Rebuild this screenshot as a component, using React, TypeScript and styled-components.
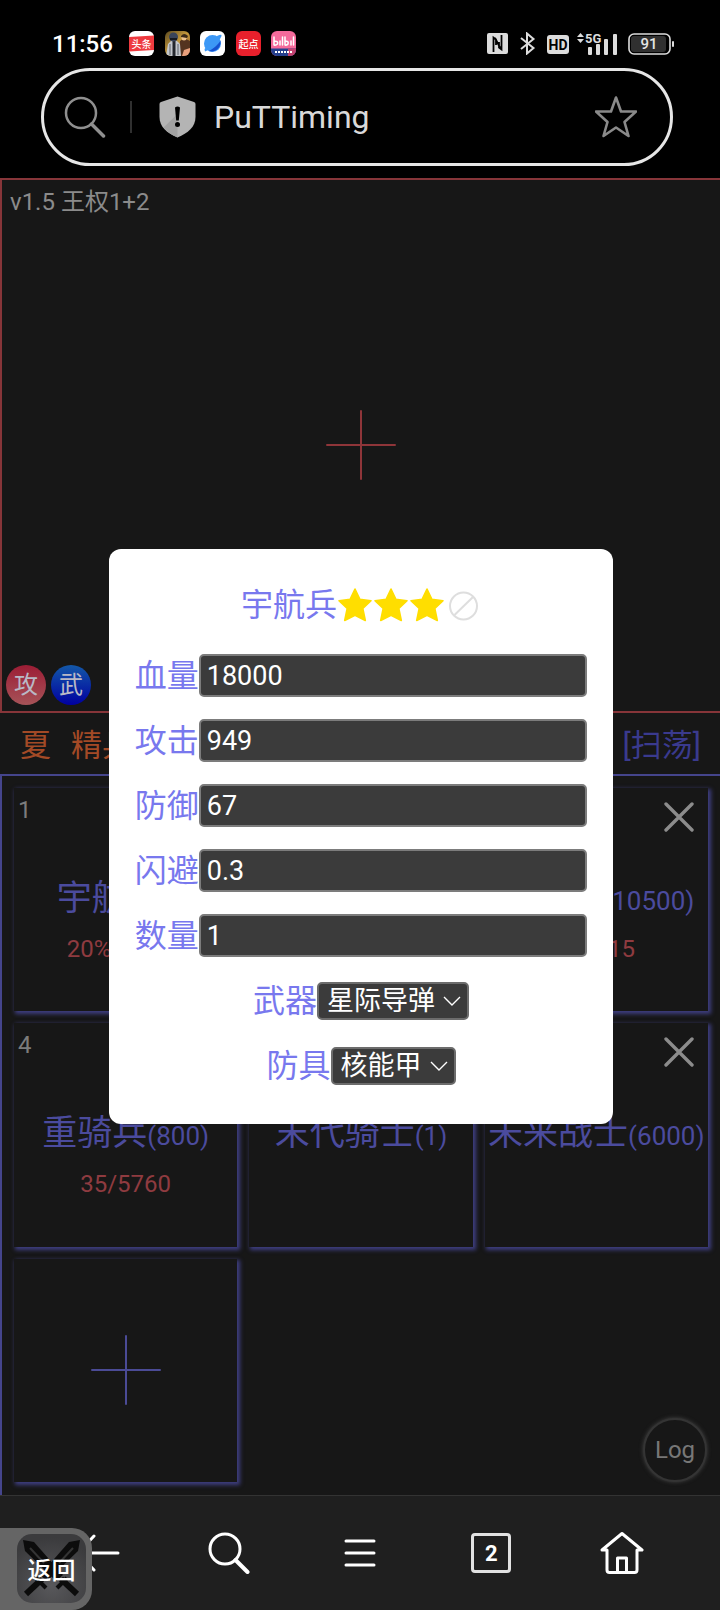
import React, { useState } from "react";
import styled, { createGlobalStyle } from "styled-components";

const GlobalStyle = createGlobalStyle`
  *, *::before, *::after { box-sizing: border-box; }
  body {
    margin: 0;
    background: #171717;
    font-family: Roboto, "Noto Sans CJK SC", sans-serif;
    font-size: 24px;
    font-weight: 400;
  }
  button, input, select { font-family: inherit; margin: 0; }
  svg { display: block; flex: none; }
`;

const Page = styled.div`
  position: relative;
  display: flex;
  flex-direction: column;
  min-height: 100vh;
  overflow: hidden;
`;

/* ---------- phone status and address bar ---------- */

const Header = styled.header`
  padding: 31px 0 12px;
  background: #000;
`;

const StatusRow = styled.div`
  display: flex;
  align-items: center;
  height: 25px;
  padding: 0 46px 0 52px;
  margin-bottom: 12px;
`;

const Clock = styled.time`
  width: 77px;
  color: #fff;
  font-weight: 500;
  line-height: 24px;
`;

const AppIcons = styled.div`
  display: flex;
  justify-content: space-between;
  width: 167px;
`;

const Signals = styled.div`
  display: flex;
  align-items: center;
  gap: 11px;
  margin-left: auto;
`;

const Network = styled.div`
  display: flex;
  align-items: center;
  gap: 8px;
`;

const AddressBar = styled.div`
  display: flex;
  align-items: center;
  height: 98px;
  margin: 0 47px 0 41px;
  padding: 0 33px 0 20px;
  border: 3px solid #e6e6e6;
  border-radius: 49px;
`;

const Divider = styled.span`
  width: 2px;
  height: 32px;
  margin: 0 27px 0 24px;
  background: #303030;
`;

const SiteName = styled.span`
  flex: 1;
  margin-left: 18px;
  color: #d9d9d9;
  font-size: 32px;
  line-height: 40px;
`;

const IconButton = styled.button`
  display: flex;
  align-items: center;
  justify-content: center;
  padding: 0;
  border: 0;
  background: none;
  color: inherit;
  cursor: pointer;
`;

/* ---------- battle field ---------- */

const Game = styled.main`
  position: relative;
  display: flex;
  flex: 1;
  flex-direction: column;
  color: #8b8b8b;
`;

const EnemyField = styled.section`
  display: flex;
  flex-direction: column;
  justify-content: space-between;
  height: 535px;
  border: 2px solid #873539;
  border-right: 0;
`;

const Version = styled.div`
  height: 44px;
  padding: 8px 8px 0;
  line-height: 28px;
`;

const AddEnemy = styled(IconButton)`
  align-self: center;
  color: #8f3539;
`;

const Badges = styled.div`
  display: flex;
  gap: 5px;
  height: 46px;
  padding-left: 4px;
`;

const Badge = styled.span<{ $from: string; $to: string }>`
  width: 40px;
  height: 40px;
  border-radius: 50%;
  background: linear-gradient(${(p) => p.$from}, ${(p) => p.$to});
  color: #b9b9c6;
  line-height: 40px;
  text-align: center;
`;

const StageBar = styled.div`
  display: flex;
  align-items: center;
  gap: 20px;
  height: 61px;
  padding: 4px 19px 0 20px;
  color: #a34a26;
  font-size: 31px;
  line-height: 40px;
`;

const Sweep = styled.button`
  margin-left: auto;
  padding: 0;
  border: 0;
  background: none;
  color: #3a3a8e;
  font-size: 31px;
  line-height: 40px;
  cursor: pointer;
`;

const Squad = styled.section`
  display: grid;
  flex: 1;
  grid-template-columns: repeat(3, 1fr);
  align-content: start;
  gap: 12px;
  padding: 12px;
  border: 2px solid #45458c;
  border-width: 2px 0 0 2px;
`;

const cell = `
  aspect-ratio: 1;
  min-width: 0;
  background: #171717;
  box-shadow: 2px 2px 4px 1px #3e3e80;
`;

const UnitCard = styled.article`
  ${cell}
  display: grid;
  grid-template-rows: 1fr auto 1fr;
`;

const CardTop = styled.div`
  display: flex;
  align-items: flex-start;
  justify-content: space-between;
  padding: 8px 14px 0 4px;
  line-height: 28px;
  color: #7c7c7c;
`;

const CloseButton = styled(IconButton)`
  margin-top: 6px;
  color: #8c8c8c;
`;

const UnitName = styled.h3`
  margin: 0;
  color: #4b4b9e;
  font-size: 35px;
  font-weight: 400;
  line-height: 42px;
  text-align: center;
  white-space: nowrap;

  small { font-size: 26px; }
`;

const Damage = styled.p`
  margin: 0;
  padding-top: 13px;
  color: #8f3b40;
  line-height: 28px;
  text-align: center;
`;

const AddUnit = styled(IconButton)`
  ${cell}
  color: #4b4b96;
`;

const LogButton = styled.button`
  position: absolute;
  right: 13px;
  bottom: 13px;
  width: 64px;
  height: 64px;
  padding: 0;
  border: 2px solid #343434;
  border-radius: 50%;
  background: #171717;
  box-shadow: 0 0 4px #444;
  color: #777;
  font-size: 24px;
  cursor: pointer;
`;

/* ---------- unit editor ---------- */

const Overlay = styled.div`
  position: absolute;
  inset: 0 0 0 2px;
  display: grid;
  place-items: center;
`;

const Dialog = styled.form`
  display: flex;
  flex-direction: column;
  gap: 22px;
  width: calc(70% + 2px);
  padding: 34px 26px 37px;
  border-radius: 12px;
  background: #fff;
  color: #7878ee;
  font-size: 32px;
  line-height: 40px;
`;

const Title = styled.h2`
  display: flex;
  align-items: center;
  justify-content: center;
  height: 43px;
  margin: 0 0 6px;
  font-size: inherit;
  font-weight: inherit;
`;

const Field = styled.div`
  display: flex;
  align-items: center;
  justify-content: center;
  height: 43px;
  white-space: nowrap;
`;

const TextInput = styled.input`
  flex: 1;
  min-width: 0;
  height: 43px;
  padding: 0 6px;
  border: 2px solid #7c7c7c;
  border-radius: 5px;
  background: #3b3b3b;
  color: #fff;
  font-size: 27px;
`;

const SelectBox = styled.span`
  display: grid;
  align-items: center;
  color: #fff;

  > * { grid-area: 1 / 1; }
  > svg { justify-self: end; margin-right: 8px; pointer-events: none; }
`;

const Select = styled.select`
  appearance: none;
  height: 38px;
  padding: 0 32px 0 8px;
  border: 2px solid #6c6c6c;
  border-radius: 5px;
  background: #3b3b3b;
  color: #fff;
  font-size: 27px;
`;

/* ---------- browser tool bar ---------- */

const NavBar = styled.nav`
  display: grid;
  grid-template-columns: repeat(5, 1fr);
  height: 115px;
  padding: 0 32px;
  border-top: 1px solid #333;
  background: #1f1f1f;
  color: #fff;
`;

const TabCount = styled.span`
  width: 40px;
  height: 40px;
  border: 3px solid #e2e2e2;
  border-radius: 4px;
  font-size: 22px;
  font-weight: 700;
  line-height: 35px;
  text-align: center;
`;

const BackBubble = styled.button`
  position: absolute;
  bottom: 0;
  left: 0;
  display: grid;
  place-items: center;
  padding: 6px 6px 7px 17px;
  border: 0;
  border-radius: 0 20px 20px 0;
  background: #656565;
  color: #fff;
  font-size: 24px;
  font-weight: 500;
  line-height: 28px;
  cursor: pointer;

  > * { grid-area: 1 / 1; }
  > span { padding-top: 4px; }
`;

/* ---------- drawings ---------- */

const Magnifier = ({ color, width }: { color: string; width: number }) => (
  <svg width="42" height="42" viewBox="0 0 42 42" fill="none" stroke={color} strokeWidth={width} strokeLinecap="round">
    <circle cx="17" cy="17" r="15" />
    <path d="M27.5 28L39.5 40" strokeWidth={width + 1} />
  </svg>
);

const Plus = () => (
  <svg width="70" height="70" viewBox="0 0 70 70" stroke="currentColor" strokeWidth="2" strokeLinecap="round">
    <path d="M35 1V69M1 35H69" />
  </svg>
);

const Cross = () => (
  <svg width="30" height="30" viewBox="0 0 30 30" stroke="currentColor" strokeWidth="3.4" strokeLinecap="round">
    <path d="M2 2L28 28M28 2L2 28" />
  </svg>
);

const Chevron = () => (
  <svg width="18" height="10" viewBox="0 0 18 10" fill="none" stroke="#fff" strokeWidth="1.4">
    <path d="M1 1L9 9L17 1" />
  </svg>
);

const GoldStar = () => (
  <svg width="36" height="36" viewBox="0 0 36 36">
    <path
      d="M18 2L22.9 12.4L34 13.7L25.8 21.4L28.3 33.5L18 28.2L7.7 33.5L10.2 21.4L2 13.7L13.1 12.4Z"
      fill="#ffde00"
      stroke="#ffde00"
      strokeWidth="1.6"
      strokeLinejoin="round"
    />
  </svg>
);

const EmptyStar = () => (
  <svg width="36" height="36" viewBox="0 0 36 36" fill="none" stroke="#dedede" strokeWidth="2">
    <circle cx="18.5" cy="19" r="13.5" />
    <path d="M9.5 28L28 10" />
  </svg>
);

const Shield = () => (
  <svg width="37" height="42" viewBox="0 0 37 42">
    <path d="M18.500 0.500L35 6Q36.500 6.500 36.500 8V21C36.500 31 29 37 18.500 41.500C8 37 .5 31 .5 21V8Q.5 6.500 2 6Z" fill="#b4b4b4" />
    <path d="M18.500 18L4.500 31.500Q9 37.500 18.500 41.500Z" fill="#a2a2a2" />
    <path d="M16 11.500Q18.500 9.500 21 11.500L19.800 24.500H17.200Z" fill="#000" />
    <circle cx="18.500" cy="28.500" r="2.500" fill="#000" />
  </svg>
);

const BookmarkStar = () => (
  <svg width="42" height="42" viewBox="0 0 42 42" fill="none" stroke="#8a8a8a" strokeWidth="2.600" strokeLinejoin="round">
    <path d="M21 1.500L26 15.500H41L29.500 26L33.500 40L21 31.500L8.500 40L12.500 26L1 15.500H16Z" />
  </svg>
);

const HeadlinesApp = () => (
  <svg width="25" height="25" viewBox="0 0 25 25">
    <rect width="25" height="25" rx="6" fill="#fff" />
    <path d="M0 6L25 4.500V19L0 20.500Z" fill="#ee3a3f" />
    <text x="12.500" y="16.500" fontSize="10" fontWeight="500" fill="#fff" textAnchor="middle">头条</text>
  </svg>
);

const BattleApp = () => (
  <svg width="25" height="25" viewBox="0 0 25 25">
    <defs>
      <clipPath id="battle"><rect width="25" height="25" rx="6" /></clipPath>
      <linearGradient id="battleSky" x1="0" y1="0" x2="1" y2="1">
        <stop offset="0" stopColor="#5b4a20" />
        <stop offset=".5" stopColor="#c79a3c" />
        <stop offset="1" stopColor="#7a4a28" />
      </linearGradient>
    </defs>
    <g clipPath="url(#battle)">
      <rect width="25" height="25" fill="url(#battleSky)" />
      <path d="M14 25L15 10L19 7L25 10V25Z" fill="#54331f" />
      <path d="M17 25L19 19L25 17V25Z" fill="#e9a07c" />
      <circle cx="19" cy="7" r="2.500" fill="#efc38d" />
      <path d="M16 5Q19 1 23 5L22 7L16 6Z" fill="#3c2a18" />
      <path d="M1 25L3 13L6 10H12L15 13L16 25Z" fill="#c4c7cc" />
      <path d="M7.500 10H10.500V25H7.500Z" fill="#24272d" />
      <path d="M5 13V24M13 13V24" stroke="#5d626b" />
      <circle cx="8.500" cy="6" r="4.500" fill="#39445a" />
      <path d="M5 7H12V9H5Z" fill="#151920" />
    </g>
  </svg>
);

const BrowserApp = () => (
  <svg width="25" height="25" viewBox="0 0 25 25">
    <rect width="25" height="25" rx="6" fill="#fff" />
    <circle cx="12.500" cy="12.500" r="8.500" fill="#3c98f6" />
    <path d="M20.500 9.500C21.500 16 16 22 8.500 20C13 18 18 14 20.500 9.500Z" fill="#1550cf" />
    <path d="M17 5Q21 3 21.500 4C22 7 14 17 5 20.500L4.500 18Z" fill="#3c98f6" />
  </svg>
);

const NovelApp = () => (
  <svg width="25" height="25" viewBox="0 0 25 25">
    <rect width="25" height="25" rx="6" fill="#e8202c" />
    <text x="12.500" y="16.500" fontSize="10" fontWeight="500" fill="#fff" textAnchor="middle">起点</text>
  </svg>
);

const VideoApp = () => (
  <svg width="25" height="25" viewBox="0 0 25 25">
    <defs>
      <clipPath id="video"><rect width="25" height="25" rx="6" /></clipPath>
    </defs>
    <g clipPath="url(#video)">
      <rect width="25" height="25" fill="#f56a9b" />
      <path d="M0 17.500H25V25H0Z" fill="#243f8c" />
      <path d="M17 17.500H25V25H17Z" fill="#c2426f" />
      <g fill="none" stroke="#fff" strokeWidth="1.500" strokeLinecap="round">
        <path d="M3 6V14M3 10.500Q7.500 9.500 6.500 13Q5 14.500 3 14M9 10V14M11.500 6V14" />
        <path d="M14 6V14M14 10.500Q18 9.500 17 13Q16 14.500 14 14M20 10V14M22.500 6V14" />
      </g>
      <path d="M4 21H21" stroke="#fff" strokeWidth="2" strokeDasharray="2 1" />
    </g>
  </svg>
);

const NfcIcon = () => (
  <svg width="21" height="21" viewBox="0 0 21 21">
    <rect width="21" height="21" rx="2" fill="#dcdcdc" />
    <path d="M6.500 19V4.500L9 6.500V12M14.500 2V16.500L12 14.500V9M8 5L13.500 15.500" fill="none" stroke="#000" strokeWidth="1.800" />
  </svg>
);

const BluetoothIcon = () => (
  <svg width="17" height="23" viewBox="0 0 17 23" fill="none" stroke="#dcdcdc" strokeWidth="2">
    <path d="M2 6L14.500 16L8 21.500V1.500L14.500 7L2 17" />
  </svg>
);

const HdIcon = () => (
  <svg width="22" height="20" viewBox="0 0 22 20">
    <rect y="1" width="22" height="19" rx="3" fill="#dcdcdc" />
    <text x="11" y="15.500" fontSize="14" fontWeight="700" fill="#000" textAnchor="middle">HD</text>
  </svg>
);

const SignalIcon = () => (
  <svg width="40" height="24" viewBox="0 0 40 24" fill="#dcdcdc">
    <path d="M0 5L3.500 1L7 5ZM0 7H7L3.500 11Z" />
    <text x="8" y="11" fontSize="13" fontWeight="700">5G</text>
    <rect x="11" y="15" width="4" height="8" rx="1" />
    <rect x="19" y="12" width="4" height="11" rx="1" />
    <rect x="27" y="7" width="4" height="16" rx="1" />
    <rect x="36" y="2" width="4" height="21" rx="1" />
  </svg>
);

const BatteryIcon = () => (
  <svg width="46" height="22" viewBox="0 0 46 22">
    <rect x="1" y="1" width="41" height="20" rx="5" fill="none" stroke="#dcdcdc" strokeWidth="1.600" />
    <rect x="3" y="3" width="35" height="16" rx="3" fill="#303030" />
    <rect x="44" y="8" width="2" height="6" rx="1" fill="#dcdcdc" />
    <text x="21" y="16" fontSize="15" fontWeight="500" fill="#e4e4e4" textAnchor="middle">91</text>
  </svg>
);

const BackIcon = () => (
  <svg width="44" height="42" viewBox="0 0 44 42" fill="none" stroke="currentColor" strokeWidth="3" strokeLinecap="round">
    <path d="M2 21H42M18 4L2 21L18 38" />
  </svg>
);

const MenuIcon = () => (
  <svg width="32" height="28" viewBox="0 0 32 28" stroke="currentColor" strokeWidth="3" strokeLinecap="round">
    <path d="M2 2H30M2 14H30M2 26H30" />
  </svg>
);

const HomeIcon = () => (
  <svg width="44" height="44" viewBox="0 0 44 44" fill="none" stroke="currentColor" strokeWidth="3" strokeLinecap="round" strokeLinejoin="round">
    <path d="M7 19H2L22 2.500L42 19H37V39Q37 41.500 34.500 41.500H9.500Q7 41.500 7 39Z" />
    <path d="M17.500 41V27H26.500V41" />
  </svg>
);

const SwordsIcon = () => (
  <svg width="69" height="69" viewBox="0 0 69 69">
    <defs>
      <radialGradient id="steel" cx=".5" cy=".75" r=".7">
        <stop offset="0" stopColor="#58585b" />
        <stop offset="1" stopColor="#3b3b3d" />
      </radialGradient>
      <g id="sword">
        <path d="M6 6L17 8L46 41L39 47L8 17Z" fill="#0c0c0c" />
        <path d="M13 14L27 29" stroke="#343434" strokeWidth="2" />
        <path d="M40 54L50 44" stroke="#0c0c0c" strokeWidth="4" />
        <path d="M44 45L60 60" stroke="#0c0c0c" strokeWidth="6" />
      </g>
    </defs>
    <rect width="69" height="69" rx="15" fill="url(#steel)" />
    <use href="#sword" />
    <use href="#sword" transform="translate(69 0) scale(-1 1)" />
  </svg>
);

/* ---------- data ---------- */

const units = [
  { name: "宇航兵", count: 1, damage: "20% 18000" },
  { name: "机甲兵", count: 1, damage: "" },
  { name: "轰炸机", count: 10500, damage: "100/15" },
  { name: "重骑兵", count: 800, damage: "35/5760" },
  { name: "末代骑士", count: 1, damage: "" },
  { name: "未来战士", count: 6000, damage: "" },
];

const stats = [
  { id: "hp", label: "血量", value: "18000" },
  { id: "attack", label: "攻击", value: "949" },
  { id: "defence", label: "防御", value: "67" },
  { id: "dodge", label: "闪避", value: "0.3" },
  { id: "amount", label: "数量", value: "1" },
];

const gear = [
  { id: "weapon", label: "武器", options: ["星际导弹"] },
  { id: "armour", label: "防具", options: ["核能甲"] },
];

function UnitEditor() {
  const [values, setValues] = useState<Record<string, string>>(
    Object.fromEntries(stats.map((s) => [s.id, s.value]))
  );
  return (
    <Overlay>
      <Dialog role="dialog" aria-label="宇航兵">
        <Title>
          宇航兵
          <GoldStar />
          <GoldStar />
          <GoldStar />
          <EmptyStar />
        </Title>
        {stats.map((s) => (
          <Field key={s.id}>
            <label htmlFor={s.id}>{s.label}</label>
            <TextInput
              id={s.id}
              value={values[s.id]}
              onChange={(e) => setValues({ ...values, [s.id]: e.target.value })}
            />
          </Field>
        ))}
        {gear.map((g) => (
          <Field key={g.id}>
            <label htmlFor={g.id}>{g.label}</label>
            <SelectBox>
              <Select id={g.id}>
                {g.options.map((o) => (
                  <option key={o}>{o}</option>
                ))}
              </Select>
              <Chevron />
            </SelectBox>
          </Field>
        ))}
      </Dialog>
    </Overlay>
  );
}

export default function App() {
  return (
    <Page>
      <GlobalStyle />
      <Header>
        <StatusRow>
          <Clock>11:56</Clock>
          <AppIcons>
            <HeadlinesApp />
            <BattleApp />
            <BrowserApp />
            <NovelApp />
            <VideoApp />
          </AppIcons>
          <Signals>
            <NfcIcon />
            <BluetoothIcon />
            <Network>
              <HdIcon />
              <SignalIcon />
            </Network>
            <BatteryIcon />
          </Signals>
        </StatusRow>
        <AddressBar>
          <Magnifier color="#8f8f8f" width={2.5} />
          <Divider />
          <Shield />
          <SiteName>PuTTiming</SiteName>
          <IconButton aria-label="收藏">
            <BookmarkStar />
          </IconButton>
        </AddressBar>
      </Header>

      <Game>
        <EnemyField>
          <Version>v1.5 王权1+2</Version>
          <AddEnemy aria-label="添加敌人">
            <Plus />
          </AddEnemy>
          <Badges>
            <Badge $from="#9c1d35" $to="#a65358">攻</Badge>
            <Badge $from="#1358a8" $to="#0000a0">武</Badge>
          </Badges>
        </EnemyField>

        <StageBar>
          <span>夏</span>
          <span>精兵</span>
          <Sweep>[扫荡]</Sweep>
        </StageBar>

        <Squad>
          {units.map((u, i) => (
            <UnitCard key={u.name}>
              <CardTop>
                <span>{i + 1}</span>
                {i % 3 === 2 && (
                  <CloseButton aria-label="移除">
                    <Cross />
                  </CloseButton>
                )}
              </CardTop>
              <UnitName>
                {u.name}
                <small>({u.count})</small>
              </UnitName>
              <Damage>{u.damage}</Damage>
            </UnitCard>
          ))}
          <AddUnit aria-label="添加单位">
            <Plus />
          </AddUnit>
        </Squad>

        <LogButton>Log</LogButton>
        <UnitEditor />
      </Game>

      <NavBar>
        <IconButton aria-label="后退"><BackIcon /></IconButton>
        <IconButton aria-label="搜索"><Magnifier color="#fff" width={3} /></IconButton>
        <IconButton aria-label="菜单"><MenuIcon /></IconButton>
        <IconButton aria-label="标签页"><TabCount>2</TabCount></IconButton>
        <IconButton aria-label="主页"><HomeIcon /></IconButton>
      </NavBar>

      <BackBubble>
        <SwordsIcon />
        <span>返回</span>
      </BackBubble>
    </Page>
  );
}
